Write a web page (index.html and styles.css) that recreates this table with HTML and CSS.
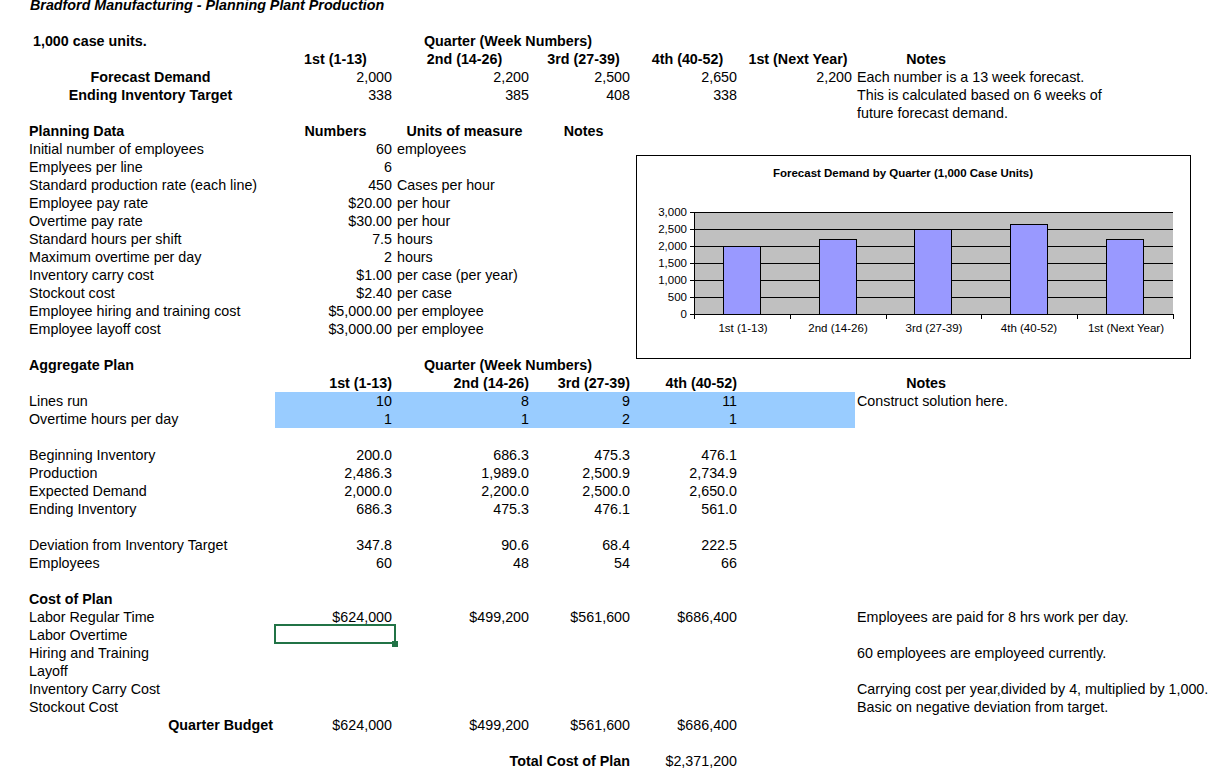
FILE: index.html
```html
<!DOCTYPE html>
<html>
<head>
<meta charset="utf-8">
<title>Bradford Manufacturing - Planning Plant Production</title>
<link rel="stylesheet" href="styles.css">
</head>
<body>
<div class="sheet">
  <div class="row"><div class="A b i title">Bradford Manufacturing - Planning Plant Production</div></div>
  <div class="row"></div>
  <div class="row"><div class="A b units">1,000 case units.</div><div class="BE b ctr">Quarter (Week Numbers)</div></div>
  <div class="row"><div class="B b ctr">1st (1-13)</div><div class="C b ctr">2nd (14-26)</div><div class="D b ctr">3rd (27-39)</div><div class="E b ctr">4th (40-52)</div><div class="F b ctr">1st (Next Year)</div><div class="G b ctr gw">Notes</div></div>
  <div class="row"><div class="A b ctr">Forecast Demand</div><div class="B r">2,000</div><div class="C r">2,200</div><div class="D r">2,500</div><div class="E r">2,650</div><div class="F r">2,200</div><div class="G">Each number is a 13 week forecast.</div></div>
  <div class="row"><div class="A b ctr">Ending Inventory Target</div><div class="B r">338</div><div class="C r">385</div><div class="D r">408</div><div class="E r">338</div><div class="G">This is calculated based on 6 weeks of</div></div>
  <div class="row"><div class="G">future forecast demand.</div></div>
  <div class="row"><div class="A b">Planning Data</div><div class="B b ctr">Numbers</div><div class="C b ctr">Units of measure</div><div class="D b ctr">Notes</div></div>
  <div class="row"><div class="A">Initial number of employees</div><div class="B r">60</div><div class="C u">employees</div></div>
  <div class="row"><div class="A">Emplyees per line</div><div class="B r">6</div></div>
  <div class="row"><div class="A">Standard production rate (each line)</div><div class="B r">450</div><div class="C u">Cases per hour</div></div>
  <div class="row"><div class="A">Employee pay rate</div><div class="B r">$20.00</div><div class="C u">per hour</div></div>
  <div class="row"><div class="A">Overtime pay rate</div><div class="B r">$30.00</div><div class="C u">per hour</div></div>
  <div class="row"><div class="A">Standard hours per shift</div><div class="B r">7.5</div><div class="C u">hours</div></div>
  <div class="row"><div class="A">Maximum overtime per day</div><div class="B r">2</div><div class="C u">hours</div></div>
  <div class="row"><div class="A">Inventory carry cost</div><div class="B r">$1.00</div><div class="C u">per case (per year)</div></div>
  <div class="row"><div class="A">Stockout cost</div><div class="B r">$2.40</div><div class="C u">per case</div></div>
  <div class="row"><div class="A">Employee hiring and training cost</div><div class="B r">$5,000.00</div><div class="C u">per employee</div></div>
  <div class="row"><div class="A">Employee layoff cost</div><div class="B r">$3,000.00</div><div class="C u">per employee</div></div>
  <div class="row"></div>
  <div class="row"><div class="A b">Aggregate Plan</div><div class="BE b ctr">Quarter (Week Numbers)</div></div>
  <div class="row"><div class="B b r">1st (1-13)</div><div class="C b r">2nd (14-26)</div><div class="D b r">3rd (27-39)</div><div class="E b r">4th (40-52)</div><div class="G b ctr gw">Notes</div></div>
  <div class="row"><div class="A">Lines run</div><div class="B r hl">10</div><div class="C r hl">8</div><div class="D r hl">9</div><div class="E r hl">11</div><div class="F hl"></div><div class="G">Construct solution here.</div></div>
  <div class="row"><div class="A">Overtime hours per day</div><div class="B r hl">1</div><div class="C r hl">1</div><div class="D r hl">2</div><div class="E r hl">1</div><div class="F hl"></div></div>
  <div class="row"></div>
  <div class="row"><div class="A">Beginning Inventory</div><div class="B r">200.0</div><div class="C r">686.3</div><div class="D r">475.3</div><div class="E r">476.1</div></div>
  <div class="row"><div class="A">Production</div><div class="B r">2,486.3</div><div class="C r">1,989.0</div><div class="D r">2,500.9</div><div class="E r">2,734.9</div></div>
  <div class="row"><div class="A">Expected Demand</div><div class="B r">2,000.0</div><div class="C r">2,200.0</div><div class="D r">2,500.0</div><div class="E r">2,650.0</div></div>
  <div class="row"><div class="A">Ending Inventory</div><div class="B r">686.3</div><div class="C r">475.3</div><div class="D r">476.1</div><div class="E r">561.0</div></div>
  <div class="row"></div>
  <div class="row"><div class="A">Deviation from Inventory Target</div><div class="B r">347.8</div><div class="C r">90.6</div><div class="D r">68.4</div><div class="E r">222.5</div></div>
  <div class="row"><div class="A">Employees</div><div class="B r">60</div><div class="C r">48</div><div class="D r">54</div><div class="E r">66</div></div>
  <div class="row"></div>
  <div class="row"><div class="A b">Cost of Plan</div></div>
  <div class="row"><div class="A">Labor Regular Time</div><div class="B r">$624,000</div><div class="C r">$499,200</div><div class="D r">$561,600</div><div class="E r">$686,400</div><div class="G">Employees are paid for 8 hrs work per day.</div></div>
  <div class="row"><div class="A">Labor Overtime</div><div class="B sel"></div></div>
  <div class="row"><div class="A">Hiring and Training</div><div class="G">60 employees are employeed currently.</div></div>
  <div class="row"><div class="A">Layoff</div></div>
  <div class="row"><div class="A">Inventory Carry Cost</div><div class="G">Carrying cost per year,divided by 4, multiplied by 1,000.</div></div>
  <div class="row"><div class="A">Stockout Cost</div><div class="G">Basic on negative deviation from target.</div></div>
  <div class="row"><div class="A b r qb">Quarter Budget</div><div class="B r">$624,000</div><div class="C r">$499,200</div><div class="D r">$561,600</div><div class="E r">$686,400</div></div>
  <div class="row"></div>
  <div class="row"><div class="D b spill">Total Cost of Plan</div><div class="E r">$2,371,200</div></div>

  <div class="chart">
    <svg width="553" height="202" viewBox="0 0 553 202" shape-rendering="crispEdges">
      <text class="ct" x="266" y="21" text-anchor="middle">Forecast Demand by Quarter (1,000 Case Units)</text>
      <rect x="57" y="56" width="479" height="102" fill="#c0c0c0"/>
      <g stroke="#000" stroke-width="1">
        <line x1="57" y1="56.5" x2="536" y2="56.5"/>
        <line x1="57" y1="73.5" x2="536" y2="73.5"/>
        <line x1="57" y1="90.5" x2="536" y2="90.5"/>
        <line x1="57" y1="107.5" x2="536" y2="107.5"/>
        <line x1="57" y1="124.5" x2="536" y2="124.5"/>
        <line x1="57" y1="141.5" x2="536" y2="141.5"/>
        <line x1="53" y1="158.5" x2="537" y2="158.5"/>
        <line x1="57.5" y1="56" x2="57.5" y2="163"/>
        <line x1="53" y1="56.5" x2="57" y2="56.5"/>
        <line x1="53" y1="73.5" x2="57" y2="73.5"/>
        <line x1="53" y1="90.5" x2="57" y2="90.5"/>
        <line x1="53" y1="107.5" x2="57" y2="107.5"/>
        <line x1="53" y1="124.5" x2="57" y2="124.5"/>
        <line x1="53" y1="141.5" x2="57" y2="141.5"/>
        <line x1="153.5" y1="158" x2="153.5" y2="163"/>
        <line x1="249.5" y1="158" x2="249.5" y2="163"/>
        <line x1="344.5" y1="158" x2="344.5" y2="163"/>
        <line x1="440.5" y1="158" x2="440.5" y2="163"/>
        <line x1="536.5" y1="158" x2="536.5" y2="163"/>
      </g>
      <g fill="#9999ff" stroke="#000" stroke-width="1">
        <rect x="86.5" y="90.5" width="37" height="68"/>
        <rect x="182.5" y="83.5" width="37" height="75"/>
        <rect x="277.5" y="73.5" width="37" height="85"/>
        <rect x="373.5" y="68.5" width="37" height="90"/>
        <rect x="469.5" y="83.5" width="37" height="75"/>
      </g>
      <g class="al" text-anchor="end">
        <text x="50" y="60">3,000</text>
        <text x="50" y="77">2,500</text>
        <text x="50" y="94">2,000</text>
        <text x="50" y="111">1,500</text>
        <text x="50" y="128">1,000</text>
        <text x="50" y="145">500</text>
        <text x="50" y="162">0</text>
      </g>
      <g class="al" text-anchor="middle">
        <text x="106" y="176">1st (1-13)</text>
        <text x="201" y="176">2nd (14-26)</text>
        <text x="297" y="176">3rd (27-39)</text>
        <text x="392" y="176">4th (40-52)</text>
        <text x="489" y="176">1st (Next Year)</text>
      </g>
    </svg>
  </div>
</div>
</body>
</html>
```
FILE: styles.css
```css
html, body {
  margin: 0;
  padding: 0;
  background: #ffffff;
}

body {
  font-family: "Liberation Sans", Arial, sans-serif;
  font-size: 14.3px;
  color: #000000;
}

.sheet {
  position: relative;
  margin-top: -4px;
}

.row {
  display: grid;
  grid-template-columns: 26px 249px 121px 137px 101px 107px 114px 1fr;
  height: 18px;
  line-height: 18px;
}

.row > div {
  white-space: nowrap;
  min-width: 0;
  padding: 0 4px 0 3px;
}

.A { grid-column: 2; }
.B { grid-column: 3; }
.C { grid-column: 4; }
.D { grid-column: 5; }
.E { grid-column: 6; }
.F { grid-column: 7; }
.G { grid-column: 8; }
.BE { grid-column: 3 / 7; }

.row > .G { padding-left: 2px; }
.row > .gw { width: 142px; box-sizing: border-box; padding: 0; }
.row > .F.r { padding-right: 3px; }
.row > .C.u { padding-left: 1px; }
.row > .title { padding-left: 4px; padding-top: 1px; line-height: 17px; }
.row > .units { padding-left: 7px; }
.row > .qb { padding-right: 2px; }

.row > .spill {
  display: flex;
  justify-content: flex-end;
}

.b { font-weight: bold; }
.i { font-style: italic; }
.r { text-align: right; }
.row > .ctr { text-align: center; padding: 0; }

.hl { background: #99ccff; }

.sel {
  position: relative;
}

.sel::before {
  content: "";
  position: absolute;
  left: -1px;
  top: -2px;
  right: 0;
  bottom: 0;
  border: 2px solid #217346;
}

.sel::after {
  content: "";
  position: absolute;
  right: -2px;
  bottom: -3px;
  width: 6px;
  height: 6px;
  background: #217346;
}

.chart {
  position: absolute;
  left: 636px;
  top: 159px;
  width: 553px;
  height: 202px;
  border: 1px solid #000;
  background: #ffffff;
}

.chart svg {
  display: block;
}

.chart text {
  font-family: "Liberation Sans", Arial, sans-serif;
  fill: #000;
}

.chart .ct {
  font-size: 11.5px;
  font-weight: bold;
}

.chart .al text {
  font-size: 11.5px;
}
```
